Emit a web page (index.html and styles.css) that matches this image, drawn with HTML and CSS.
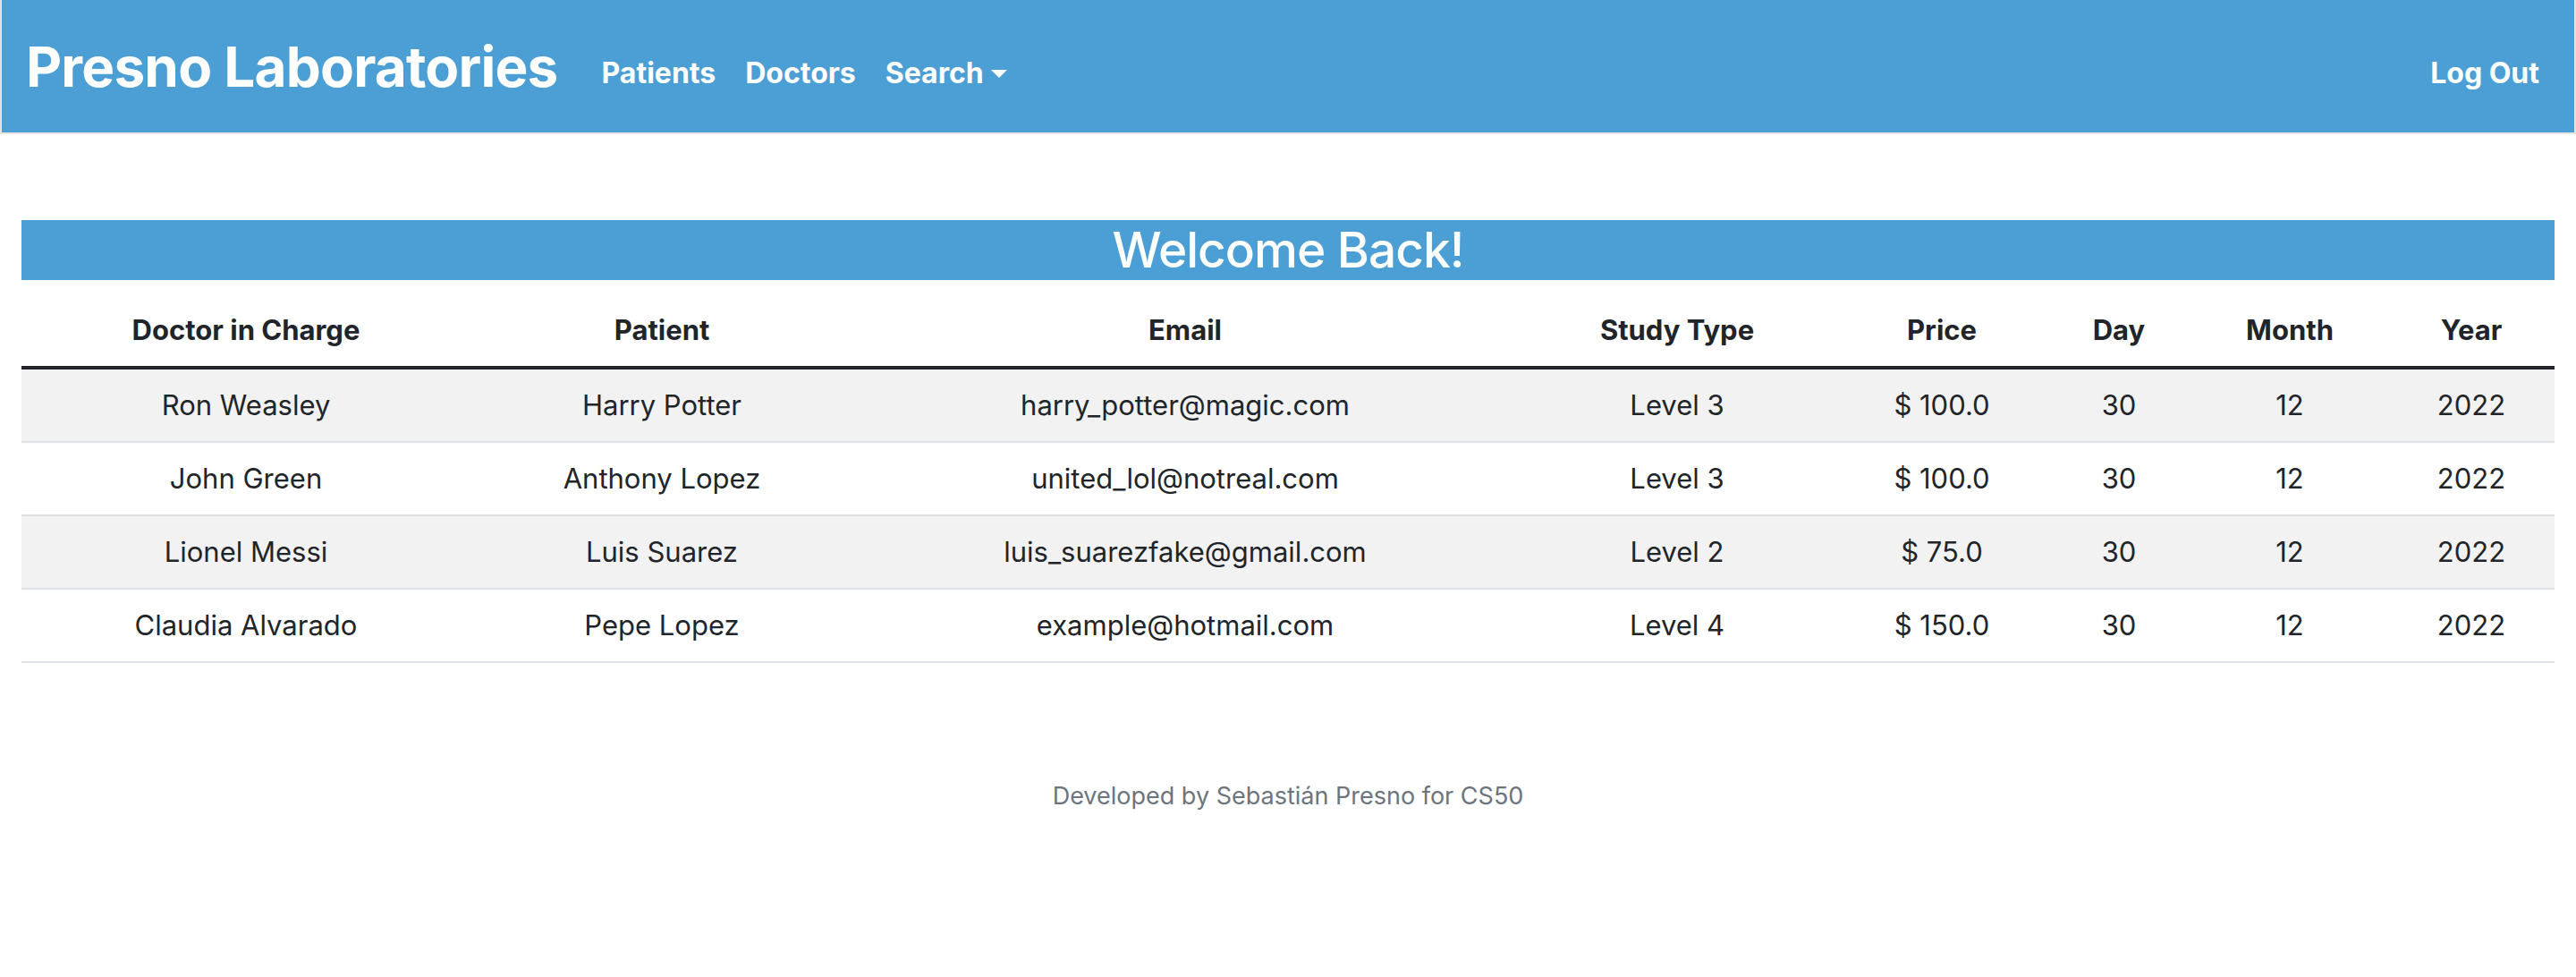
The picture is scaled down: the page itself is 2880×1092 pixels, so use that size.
FILE: index.html
```html
<!DOCTYPE html>
<html lang="en">
<head>
<meta charset="utf-8">
<title>Presno Laboratories</title>
<link rel="stylesheet" href="styles.css">
</head>
<body>
<nav class="navbar">
  <a class="brand" href="#">Presno Laboratories</a>
  <ul class="nav-links">
    <li><a href="#">Patients</a></li>
    <li><a href="#">Doctors</a></li>
    <li><a href="#" class="dropdown">Search<span class="caret"></span></a></li>
  </ul>
  <ul class="nav-links nav-right">
    <li><a href="#">Log Out</a></li>
  </ul>
</nav>
<main class="main">
  <h3 class="welcome">Welcome Back!</h3>
  <table class="table">
    <colgroup>
      <col class="c1"><col class="c2"><col class="c3"><col class="c4"><col class="c5"><col class="c6"><col class="c7"><col class="c8">
    </colgroup>
    <thead>
      <tr>
        <th>Doctor in Charge</th><th>Patient</th><th>Email</th><th>Study Type</th><th>Price</th><th>Day</th><th>Month</th><th>Year</th>
      </tr>
    </thead>
    <tbody>
      <tr><td>Ron Weasley</td><td>Harry Potter</td><td>harry_potter@magic.com</td><td>Level 3</td><td>$ 100.0</td><td>30</td><td>12</td><td>2022</td></tr>
      <tr><td>John Green</td><td>Anthony Lopez</td><td>united_lol@notreal.com</td><td>Level 3</td><td>$ 100.0</td><td>30</td><td>12</td><td>2022</td></tr>
      <tr><td>Lionel Messi</td><td>Luis Suarez</td><td>luis_suarezfake@gmail.com</td><td>Level 2</td><td>$ 75.0</td><td>30</td><td>12</td><td>2022</td></tr>
      <tr><td>Claudia Alvarado</td><td>Pepe Lopez</td><td>example@hotmail.com</td><td>Level 4</td><td>$ 150.0</td><td>30</td><td>12</td><td>2022</td></tr>
    </tbody>
  </table>
</main>
<footer class="footer">Developed by Sebastián Presno for CS50</footer>
</body>
</html>
```
FILE: styles.css
```css
* { box-sizing: border-box; }
html, body { margin: 0; padding: 0; }
body {
  font-family: Inter, "Liberation Sans", sans-serif;
  color: #212529;
  background: #fff;
}
.navbar {
  display: flex;
  align-items: center;
  height: 150px;
  background: #4b9fd5;
  border: 2px solid #e4e4e4;
  border-top: 0;
  padding: 0 39px 0 27px;
}
.brand {
  color: #fff;
  text-decoration: none;
  font-size: 62px;
  font-weight: 700;
  line-height: 1;
  letter-spacing: -0.8px;
  padding-top: 2px;
  margin-right: 49px;
}
.nav-links {
  display: flex;
  list-style: none;
  margin: 0;
  padding: 15px 0 0 0;
  gap: 33px;
}
.nav-links a {
  color: #fff;
  text-decoration: none;
  font-size: 32px;
  font-weight: 700;
  line-height: 48px;
  display: flex;
  align-items: center;
}
.nav-right { margin-left: auto; }
.caret {
  display: inline-block;
  width: 0;
  height: 0;
  margin-left: 8px;
  margin-top: 2px;
  border-top: 9px solid #fff;
  border-left: 9px solid transparent;
  border-right: 9px solid transparent;
}
.main {
  padding: 96px 24px 0 24px;
}
.welcome {
  margin: 0 0 16px 0;
  background: #4b9fd5;
  color: #fff;
  text-align: center;
  font-size: 55px;
  font-weight: 500;
  line-height: 67px;
  letter-spacing: -1px;
}
.table {
  width: 100%;
  table-layout: fixed;
  border-collapse: separate;
  border-spacing: 0;
}
.c1 { width: 502px; }
.c2 { width: 428px; }
.c3 { width: 742px; }
.c4 { width: 358px; }
.c5 { width: 234px; }
.c6 { width: 162px; }
.c7 { width: 220px; }
.c8 { width: 186px; }
.table th, .table td {
  padding: 16px;
  text-align: center;
  font-size: 31px;
  line-height: 48px;
  white-space: nowrap;
}
.table th {
  font-weight: 700;
  border-bottom: 4px solid #212529;
}
.table td {
  font-weight: 400;
  border-bottom: 2px solid #dee2e6;
}
.table tbody tr:nth-child(odd) td {
  background: #f2f2f2;
}
.footer {
  padding-top: 128px;
  text-align: center;
  font-size: 27px;
  line-height: 42px;
  color: #6c757d;
}
```
